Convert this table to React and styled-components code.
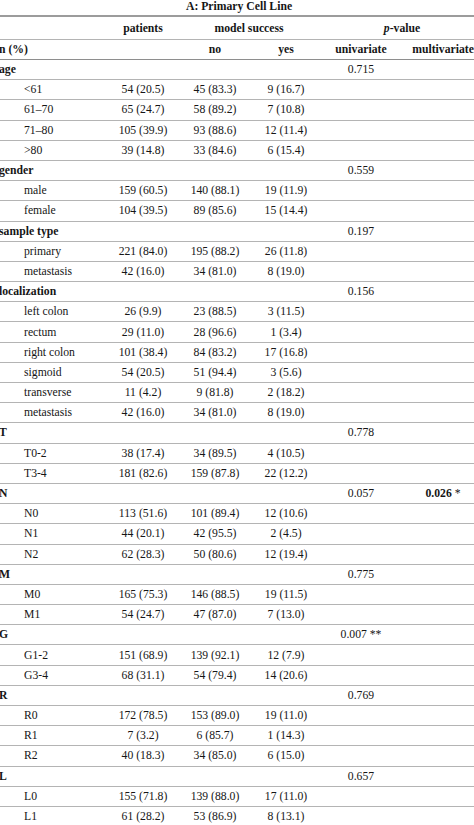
import React from "react";
import styled, { createGlobalStyle } from "styled-components";

const GlobalStyle = createGlobalStyle`
  html, body {
    margin: 0;
    padding: 0;
    background: #fff;
  }
  body {
    overflow: hidden;
    font-family: "Liberation Serif", "Times New Roman", serif;
    color: #161616;
  }
`;

const Page = styled.div`
  width: 474px;
  height: 825px;
  overflow: hidden;
`;

const Table = styled.table`
  margin-left: -1px;
  width: 485px;
  border-collapse: collapse;
  table-layout: fixed;
  font-size: 11.7px;
`;

const Col = styled.col`
  width: ${p => p.$w}px;
`;

const TitleCell = styled.td`
  height: 14px;
  padding: 0 5px 1px 0;
  line-height: 12px;
  text-align: center;
  font-weight: bold;
  border-bottom: 2px solid #9c9c9c;
`;

const HeadCell = styled.th`
  height: ${p => p.$h}px;
  padding: 0;
  font-weight: bold;
  text-align: ${p => (p.$left ? "left" : "center")};
  border-bottom: ${p => (p.$strong ? "1.5px solid #8e8e8e" : "1px solid #b4b4b4")};
`;

const Row = styled.tr`
  height: 20.2px;
`;

const Cell = styled.td`
  padding: 0 0 0 ${p => (p.$indent ? 25 : 0)}px;
  text-align: ${p => (p.$left ? "left" : "center")};
  font-weight: ${p => (p.$bold ? "bold" : "normal")};
  white-space: nowrap;
  border-bottom: 1px solid #b4b4b4;
`;

const Strong = styled.b`
  font-weight: bold;
`;

const groups = [
  { name: "age", p: "0.715", rows: [
    ["<61", "54 (20.5)", "45 (83.3)", "9 (16.7)"],
    ["61–70", "65 (24.7)", "58 (89.2)", "7 (10.8)"],
    ["71–80", "105 (39.9)", "93 (88.6)", "12 (11.4)"],
    [">80", "39 (14.8)", "33 (84.6)", "6 (15.4)"],
  ] },
  { name: "gender", p: "0.559", rows: [
    ["male", "159 (60.5)", "140 (88.1)", "19 (11.9)"],
    ["female", "104 (39.5)", "89 (85.6)", "15 (14.4)"],
  ] },
  { name: "sample type", p: "0.197", rows: [
    ["primary", "221 (84.0)", "195 (88.2)", "26 (11.8)"],
    ["metastasis", "42 (16.0)", "34 (81.0)", "8 (19.0)"],
  ] },
  { name: "localization", p: "0.156", rows: [
    ["left colon", "26 (9.9)", "23 (88.5)", "3 (11.5)"],
    ["rectum", "29 (11.0)", "28 (96.6)", "1 (3.4)"],
    ["right colon", "101 (38.4)", "84 (83.2)", "17 (16.8)"],
    ["sigmoid", "54 (20.5)", "51 (94.4)", "3 (5.6)"],
    ["transverse", "11 (4.2)", "9 (81.8)", "2 (18.2)"],
    ["metastasis", "42 (16.0)", "34 (81.0)", "8 (19.0)"],
  ] },
  { name: "T", p: "0.778", rows: [
    ["T0-2", "38 (17.4)", "34 (89.5)", "4 (10.5)"],
    ["T3-4", "181 (82.6)", "159 (87.8)", "22 (12.2)"],
  ] },
  { name: "N", p: "0.057", multi: "0.026", rows: [
    ["N0", "113 (51.6)", "101 (89.4)", "12 (10.6)"],
    ["N1", "44 (20.1)", "42 (95.5)", "2 (4.5)"],
    ["N2", "62 (28.3)", "50 (80.6)", "12 (19.4)"],
  ] },
  { name: "M", p: "0.775", rows: [
    ["M0", "165 (75.3)", "146 (88.5)", "19 (11.5)"],
    ["M1", "54 (24.7)", "47 (87.0)", "7 (13.0)"],
  ] },
  { name: "G", p: "0.007 **", rows: [
    ["G1-2", "151 (68.9)", "139 (92.1)", "12 (7.9)"],
    ["G3-4", "68 (31.1)", "54 (79.4)", "14 (20.6)"],
  ] },
  { name: "R", p: "0.769", rows: [
    ["R0", "172 (78.5)", "153 (89.0)", "19 (11.0)"],
    ["R1", "7 (3.2)", "6 (85.7)", "1 (14.3)"],
    ["R2", "40 (18.3)", "34 (85.0)", "6 (15.0)"],
  ] },
  { name: "L", p: "0.657", rows: [
    ["L0", "155 (71.8)", "139 (88.0)", "17 (11.0)"],
    ["L1", "61 (28.2)", "53 (86.9)", "8 (13.1)"],
  ] },
];

function Group({ group }) {
  return (
    <>
      <Row>
        <Cell $left $bold>{group.name}</Cell>
        <Cell />
        <Cell />
        <Cell />
        <Cell>{group.p}</Cell>
        <Cell>{group.multi && <><Strong>{group.multi}</Strong> *</>}</Cell>
      </Row>
      {group.rows.map((r, i) => (
        <Row key={group.name + i}>
          <Cell $left $indent>{r[0]}</Cell>
          <Cell>{r[1]}</Cell>
          <Cell>{r[2]}</Cell>
          <Cell>{r[3]}</Cell>
          <Cell />
          <Cell />
        </Row>
      ))}
    </>
  );
}

export default function App() {
  return (
    <Page>
      <GlobalStyle />
      <Table>
        <colgroup>
          <Col $w={109} />
          <Col $w={70} />
          <Col $w={74} />
          <Col $w={68} />
          <Col $w={82} />
          <Col $w={82} />
        </colgroup>
        <thead>
          <tr>
            <TitleCell colSpan={6}>A: Primary Cell Line</TitleCell>
          </tr>
          <tr>
            <HeadCell $h={22} />
            <HeadCell $h={22}>patients</HeadCell>
            <HeadCell $h={22} colSpan={2}>model success</HeadCell>
            <HeadCell $h={22} colSpan={2}><i>p</i>-value</HeadCell>
          </tr>
          <tr>
            <HeadCell $h={19} $left $strong>n (%)</HeadCell>
            <HeadCell $h={19} $strong />
            <HeadCell $h={19} $strong>no</HeadCell>
            <HeadCell $h={19} $strong>yes</HeadCell>
            <HeadCell $h={19} $strong>univariate</HeadCell>
            <HeadCell $h={19} $strong>multivariate</HeadCell>
          </tr>
        </thead>
        <tbody>
          {groups.map(g => <Group key={g.name} group={g} />)}
        </tbody>
      </Table>
    </Page>
  );
}
